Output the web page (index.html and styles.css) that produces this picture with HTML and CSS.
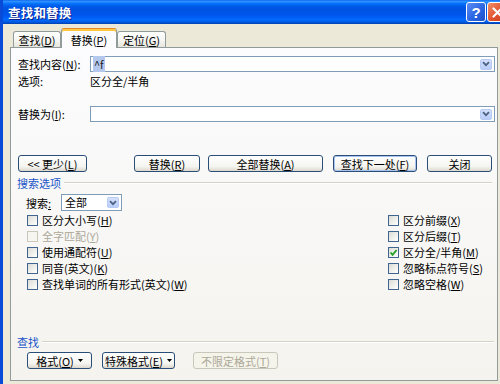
FILE: index.html
```html
<!DOCTYPE html>
<html lang="zh-CN">
<head>
<meta charset="utf-8">
<title>查找和替换</title>
<link rel="stylesheet" href="styles.css">
</head>
<body>
<div class="window">
  <div class="titlebar">
    <span class="title">查找和替换</span>
    <span class="tb-btn help">?</span>
    <span class="tb-btn close"><svg width="11" height="11" viewBox="0 0 11 11"><path d="M1.5 1.5 L9.5 9.5 M9.5 1.5 L1.5 9.5" stroke="#fff" stroke-width="2.2" stroke-linecap="round"/></svg></span>
  </div>
  <div class="client">
    <div class="tabs">
      <div class="tab t1">查找(<u>D</u>)</div>
      <div class="tab t2 active">替换(<u>P</u>)</div>
      <div class="tab t3">定位(<u>G</u>)</div>
    </div>
    <div class="panel">
      <div class="field">
        <span class="field-label">查找内容(<u>N</u>):</span>
        <div class="combo">
          <span class="combo-text"><span class="sel">^f</span></span>
          <span class="dd-btn"><svg width="8" height="6" viewBox="0 0 8 6"><path d="M1 1.2 L4 4.2 L7 1.2" fill="none" stroke="#4D6185" stroke-width="1.8"/></svg></span>
        </div>
      </div>
      <div class="field opt-row">
        <span class="field-label">选项:</span>
        <span>区分全/半角</span>
      </div>
      <div class="field replace-row">
        <span class="field-label">替换为(<u>I</u>):</span>
        <div class="combo">
          <span class="combo-text"></span>
          <span class="dd-btn"><svg width="8" height="6" viewBox="0 0 8 6"><path d="M1 1.2 L4 4.2 L7 1.2" fill="none" stroke="#4D6185" stroke-width="1.8"/></svg></span>
        </div>
      </div>
      <div class="btn-row">
        <span class="btn b-less">&lt;&lt; 更少(<u>L</u>)</span>
        <span class="btn b-rep">替换(<u>R</u>)</span>
        <span class="btn b-all">全部替换(<u>A</u>)</span>
        <span class="btn b-next default">查找下一处(<u>F</u>)</span>
        <span class="btn b-close">关闭</span>
      </div>
      <div class="group-head">
        <span class="group-label">搜索选项</span>
        <span class="group-line"></span>
      </div>
      <div class="search-row">
        <span class="search-label">搜索<u>:</u></span>
        <div class="select">
          <span class="combo-text">全部</span>
          <span class="dd-btn"><svg width="8" height="6" viewBox="0 0 8 6"><path d="M1 1.2 L4 4.2 L7 1.2" fill="none" stroke="#4D6185" stroke-width="1.8"/></svg></span>
        </div>
      </div>
      <div class="checks">
        <div class="col">
          <label class="chk"><span class="box"></span>区分大小写(<u>H</u>)</label>
          <label class="chk disabled"><span class="box"></span>全字匹配(<u>Y</u>)</label>
          <label class="chk"><span class="box"></span>使用通配符(<u>U</u>)</label>
          <label class="chk"><span class="box"></span>同音(英文)(<u>K</u>)</label>
          <label class="chk"><span class="box"></span>查找单词的所有形式(英文)(<u>W</u>)</label>
        </div>
        <div class="col">
          <label class="chk"><span class="box"></span>区分前缀(<u>X</u>)</label>
          <label class="chk"><span class="box"></span>区分后缀(<u>T</u>)</label>
          <label class="chk"><span class="box checked"><svg width="9" height="9" viewBox="0 0 9 9"><path d="M1.5 4.5 L3.6 6.8 L7.6 2" fill="none" stroke="#21A121" stroke-width="1.8"/></svg></span>区分全/半角(<u>M</u>)</label>
          <label class="chk"><span class="box"></span>忽略标点符号(<u>S</u>)</label>
          <label class="chk"><span class="box"></span>忽略空格(<u>W</u>)</label>
        </div>
      </div>
      <div class="bottom">
        <div class="group-head">
          <span class="group-label">查找</span>
          <span class="group-line"></span>
        </div>
        <div class="btn-row2">
          <span class="btn b-fmt">格式(<u>O</u>)<svg class="tri" width="5" height="3" viewBox="0 0 5 3"><path d="M0 0 H5 L2.5 3 Z" fill="#000"/></svg></span>
          <span class="btn b-spec">特殊格式(<u>E</u>)<svg class="tri" width="5" height="3" viewBox="0 0 5 3"><path d="M0 0 H5 L2.5 3 Z" fill="#000"/></svg></span>
          <span class="btn b-nofmt disabled">不限定格式(<u>T</u>)</span>
        </div>
      </div>
    </div>
  </div>
</div>
</body>
</html>
```
FILE: styles.css
```css
* { box-sizing: border-box; }
html, body { margin: 0; padding: 0; }
body {
  width: 500px;
  height: 384px;
  overflow: hidden;
  background: #ECE9D8;
  font-family: "Noto Sans CJK SC", "Liberation Sans", sans-serif;
  font-size: 11px;
  color: #000;
}
u { text-decoration: underline; text-underline-offset: 1px; }

.window {
  width: 516px;
  height: 384px;
  display: flex;
  flex-direction: column;
  border-left: 3px solid #0A4AD9;
  background: #ECE9D8;
}

.titlebar {
  height: 24px;
  flex: none;
  display: flex;
  align-items: center;
  padding: 0 8px 0 5px;
  background: linear-gradient(to bottom, #0058EE 0%, #3593FF 4%, #288EFF 8%, #127DFF 12%, #036FFC 16%, #0262EE 22%, #0057E5 30%, #0054E3 40%, #0055EB 60%, #005BF5 70%, #026AFE 80%, #0062EF 88%, #0052D6 94%, #0040AB 100%);
}
.title {
  color: #fff;
  font-weight: bold;
  font-size: 12.5px;
  text-shadow: 1px 1px 0 #0A1E8A;
  letter-spacing: 0.2px;
}
.tb-btn {
  width: 20px;
  height: 20px;
  border: 1px solid #fff;
  border-radius: 3px;
  display: flex;
  align-items: center;
  justify-content: center;
  color: #fff;
}
.help {
  margin-left: auto;
  background: linear-gradient(135deg, #5A8CF5, #2863E0 60%, #1E50C8);
  font-family: "Liberation Sans", sans-serif;
  font-weight: bold;
  font-size: 15px;
}
.close {
  margin-left: 1px;
  width: 21px;
  background: linear-gradient(135deg, #F0906A, #E0512C 55%, #C8401E);
}

.client {
  flex: 1;
  padding: 4px 0 0 7px;
  display: flex;
  flex-direction: column;
}

.tabs {
  height: 19px;
  display: flex;
  align-items: flex-end;
  padding-left: 3px;
}
.tab {
  height: 16px;
  border: 1px solid #919B9C;
  border-bottom: 0;
  border-radius: 3px 3px 0 0;
  background: linear-gradient(#FFFFFF, #F4F4F0 60%, #E6E5DD);
  display: flex;
  align-items: center;
  justify-content: center;
  line-height: 14px;
}
.t1 { width: 48px; }
.t2 { width: 56px; }
.t3 { width: 49px; }
.tab.active {
  height: 20px;
  margin-bottom: -1px;
  position: relative;
  z-index: 1;
  background: #FCFCFE;
  border-top: 1px solid #E68B2C;
  box-shadow: inset 0 2px 0 #FFC73C;
  padding-top: 2px;
}

.panel {
  width: 488px;
  height: 334px;
  border: 1px solid #919B9C;
  background: linear-gradient(#FCFCFE, #F4F3EE);
  display: flex;
  flex-direction: column;
  padding: 8px 2px 11px 7px;
}

.field {
  display: flex;
  align-items: center;
  height: 16px;
}
.field-label { width: 72px; flex: none; }
.opt-row { margin-top: 1px; }
.replace-row { margin-top: 17px; }

.combo, .select {
  height: 16px;
  border: 1px solid #7F9DB9;
  background: #fff;
  display: flex;
  align-items: center;
  padding: 0 2px 0 2px;
}
.combo { flex: 1; }
.combo-text { flex: 1; line-height: 13px; }
.sel {
  background: #B4C8EE;
  padding: 0 1px;
  color: #202020;
}
.dd-btn {
  width: 12px;
  height: 11px;
  border: 1px solid #B6CAF6;
  border-radius: 2px;
  background: linear-gradient(#D4E0FC, #B9CDF8);
  display: flex;
  align-items: center;
  justify-content: center;
}

.btn-row {
  margin-top: 33px;
  display: flex;
  height: 17px;
}
.btn {
  height: 17px;
  border: 1px solid #2A4E78;
  border-radius: 3px;
  background: linear-gradient(#FFFFFF, #F4F4F0 70%, #DCD8CC);
  display: flex;
  align-items: center;
  justify-content: center;
  line-height: 14px;
}
.b-less { width: 69px; }
.b-rep { width: 66px; margin-left: 47px; }
.b-all { width: 115px; margin-left: 8px; }
.b-next { width: 84px; margin-left: 10px; }
.b-close { width: 65px; margin-left: 10px; }
.btn.default { box-shadow: inset 0 0 0 1px #A9C3F0; }

.group-head {
  height: 16px;
  margin-top: 3px;
  margin-left: -1px;
  margin-right: 3px;
  display: flex;
  align-items: center;
}
.group-label { color: #1B55C8; }
.group-line {
  flex: 1;
  height: 2px;
  margin-left: 3px;
  border-top: 1px solid #D6D3C6;
  border-bottom: 1px solid #FFFFFF;
}

.search-row {
  margin-top: 3px;
  height: 17px;
  display: flex;
  align-items: center;
  padding-left: 8px;
}
.search-label { width: 35px; }
.select { width: 61px; height: 17px; padding-left: 3px; }

.checks {
  margin-top: 1px;
  display: grid;
  grid-template-columns: 361px 1fr;
  padding-left: 9px;
}
.col { display: flex; flex-direction: column; }
.chk {
  height: 16px;
  display: flex;
  align-items: center;
  white-space: nowrap;
}
.box {
  width: 11px;
  height: 11px;
  margin-right: 4px;
  border: 1px solid #3F6590;
  background: linear-gradient(135deg, #DCDCD6, #FFFFFF);
  display: flex;
  align-items: center;
  justify-content: center;
}
.chk.disabled { color: #ACA899; }
.chk.disabled .box { border-color: #CAC8BB; background: #F6F5F0; }

.bottom { margin-top: auto; }
.bottom .group-head { margin-top: 0; margin-right: 1px; }
.btn-row2 {
  margin-top: 2px;
  display: flex;
  height: 17px;
  padding-left: 9px;
}
.b-fmt { width: 65px; }
.b-spec { width: 73px; margin-left: 10px; }
.b-nofmt { width: 85px; margin-left: 18px; }
.tri { margin-left: 4px; }
.btn.disabled {
  border-color: #C9C7BA;
  background: #F5F4EA;
  color: #ACA899;
}
```
